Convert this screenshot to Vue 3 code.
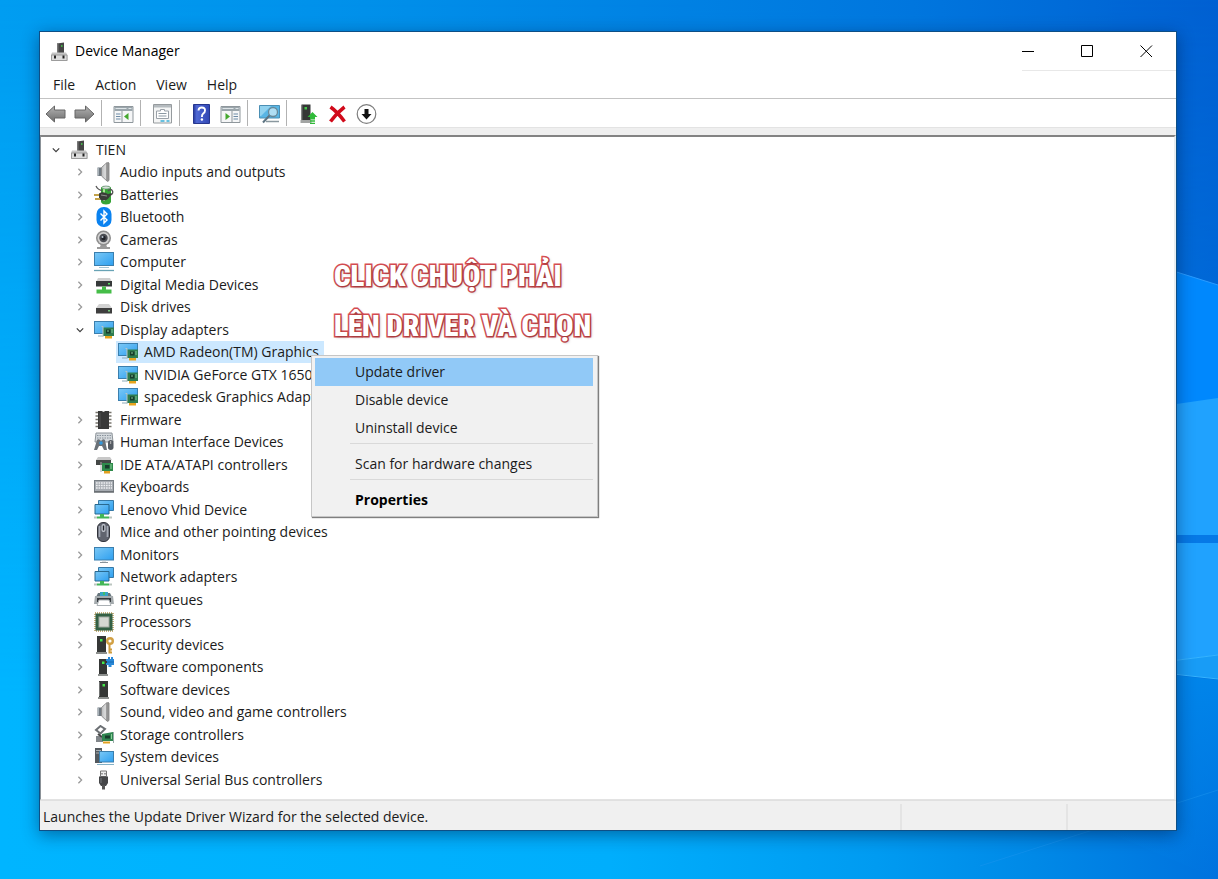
<script setup>
import { ref } from 'vue'

const menus = ['File', 'Action', 'View', 'Help']

const tools = [
  { icon: 'back', label: 'Back' },
  { icon: 'forward', label: 'Forward' },
  { sep: true },
  { icon: 'tree-pane', label: 'Show/Hide Console Tree' },
  { sep: true },
  { icon: 'properties', label: 'Properties' },
  { sep: true },
  { icon: 'help', label: 'Help' },
  { icon: 'action-pane', label: 'Show/Hide Action Pane' },
  { sep: true },
  { icon: 'scan', label: 'Scan for hardware changes' },
  { sep: true },
  { icon: 'update', label: 'Update device driver' },
  { icon: 'remove', label: 'Uninstall device' },
  { icon: 'disable', label: 'Disable device' },
]

const nodes = [
  { level: 0, icon: 'root', text: 'TIEN', open: true },
  { level: 1, icon: 'speaker', text: 'Audio inputs and outputs' },
  { level: 1, icon: 'battery', text: 'Batteries' },
  { level: 1, icon: 'bluetooth', text: 'Bluetooth' },
  { level: 1, icon: 'camera', text: 'Cameras' },
  { level: 1, icon: 'computer', text: 'Computer' },
  { level: 1, icon: 'media', text: 'Digital Media Devices' },
  { level: 1, icon: 'disk', text: 'Disk drives' },
  { level: 1, icon: 'display', text: 'Display adapters', open: true },
  { level: 2, icon: 'display', text: 'AMD Radeon(TM) Graphics', leaf: true },
  { level: 2, icon: 'display', text: 'NVIDIA GeForce GTX 1650', leaf: true },
  { level: 2, icon: 'display', text: 'spacedesk Graphics Adapter', leaf: true },
  { level: 1, icon: 'firmware', text: 'Firmware' },
  { level: 1, icon: 'hid', text: 'Human Interface Devices' },
  { level: 1, icon: 'ide', text: 'IDE ATA/ATAPI controllers' },
  { level: 1, icon: 'keyboard', text: 'Keyboards' },
  { level: 1, icon: 'network', text: 'Lenovo Vhid Device' },
  { level: 1, icon: 'mouse', text: 'Mice and other pointing devices' },
  { level: 1, icon: 'monitor', text: 'Monitors' },
  { level: 1, icon: 'network', text: 'Network adapters' },
  { level: 1, icon: 'printer', text: 'Print queues' },
  { level: 1, icon: 'cpu', text: 'Processors' },
  { level: 1, icon: 'security', text: 'Security devices' },
  { level: 1, icon: 'component', text: 'Software components' },
  { level: 1, icon: 'tower', text: 'Software devices' },
  { level: 1, icon: 'speaker', text: 'Sound, video and game controllers' },
  { level: 1, icon: 'storage', text: 'Storage controllers' },
  { level: 1, icon: 'system', text: 'System devices' },
  { level: 1, icon: 'usb', text: 'Universal Serial Bus controllers' },
]

const selected = ref(9)

const contextMenu = [
  { text: 'Update driver', active: true },
  { text: 'Disable device' },
  { text: 'Uninstall device' },
  { sep: true },
  { text: 'Scan for hardware changes' },
  { sep: true },
  { text: 'Properties', bold: true },
]
</script>

<template>
  <div class="desktop">
    <svg class="wallpaper" viewBox="0 0 1218 879" preserveAspectRatio="none" aria-hidden="true">
      <defs>
        <linearGradient id="w-base" x1="0" y1="0" x2="1" y2="0">
          <stop offset="0" stop-color="#009df1" />
          <stop offset=".3" stop-color="#0090ea" />
          <stop offset=".75" stop-color="#0076de" />
          <stop offset="1" stop-color="#0060d2" />
        </linearGradient>
        <linearGradient id="w-low" x1="0" y1="0" x2="1" y2="0">
          <stop offset="0" stop-color="#00b5ff" />
          <stop offset=".5" stop-color="#00aefc" />
          <stop offset=".72" stop-color="#009bf1" />
          <stop offset=".85" stop-color="#0089e7" />
          <stop offset="1" stop-color="#0072de" />
        </linearGradient>
        <linearGradient id="w-fade" x1="0" y1="0" x2="0" y2="1">
          <stop offset="0" stop-color="#fff" stop-opacity="0" />
          <stop offset=".8" stop-color="#fff" />
        </linearGradient>
        <linearGradient id="w-corner" x1="0" y1="0" x2="0" y2="1">
          <stop offset="0" stop-color="#0085ea" />
          <stop offset="1" stop-color="#0085ea" stop-opacity="0" />
        </linearGradient>
        <mask id="w-mask"><rect width="1218" height="879" fill="url(#w-fade)" /></mask>
      </defs>
      <rect width="1218" height="879" fill="url(#w-base)" />
      <rect width="1218" height="879" fill="url(#w-low)" mask="url(#w-mask)" />
      <path d="M1100 248L1218 285V420H1100z" fill="#0088fd" />
      <path d="M1100 248L1218 285" stroke="#2a9cff" fill="none" />
      <path d="M1100 415L1218 398V655L1100 670z" fill="#20a2fe" />
      <path d="M1100 535H1218V543H1100z" fill="#0679e6" />
      <path d="M1100 670L1218 655V679L1100 665z" fill="#189cf6" />
      <path d="M1100 667L1218 680V879L1100 829z" fill="url(#w-corner)" />
      <path d="M1100 670L1218 655M1100 666L1218 679" stroke="#36b4ff" fill="none" />
      <path d="M980 866L1218 790" stroke="#1b96f0" stroke-opacity=".5" fill="none" />
    </svg>

    <svg class="defs" width="0" height="0" aria-hidden="true">
      <defs>
        <linearGradient id="g-screen" x1="0" y1="0" x2="1" y2="1">
          <stop offset="0" stop-color="#7bc8f5" />
          <stop offset="1" stop-color="#2d9ff0" />
        </linearGradient>
        <linearGradient id="g-metal" x1="0" y1="0" x2="1" y2="0">
          <stop offset="0" stop-color="#b8babc" />
          <stop offset=".5" stop-color="#dcdcdc" />
          <stop offset="1" stop-color="#8e8e8e" />
        </linearGradient>
        <linearGradient id="g-arrow" x1="0" y1="0" x2="0" y2="1">
          <stop offset="0" stop-color="#b4b4b4" />
          <stop offset="1" stop-color="#6c6c6c" />
        </linearGradient>
        <linearGradient id="g-help" x1="0" y1="0" x2="1" y2="0">
          <stop offset="0" stop-color="#25389c" />
          <stop offset=".2" stop-color="#4f68d4" />
          <stop offset="1" stop-color="#3147b4" />
        </linearGradient>

        <symbol id="root" viewBox="0 0 20 20">
          <path d="M7 1.500L14 .5V11H7z" fill="#454545" />
          <path d="M7 1.500L8.500 1.200V11H7z" fill="#777" />
          <rect x="11" y="3" width="1.500" height="2" fill="#46b04a" />
          <path d="M2 10.500H16L17.500 13V19H1V13z" fill="#c6c6c6" />
          <path d="M1.500 13H17V18.500H1.500z" fill="#dcdcdc" stroke="#9c9c9c" />
          <path d="M4 13.500h2v3H4zM12.500 13.500h2v3h-2z" fill="#222" />
        </symbol>
        <symbol id="speaker" viewBox="0 0 20 20">
          <path d="M3.500 5.500H7.500V14H3.500z" fill="#6f7880" />
          <path d="M4.500 6V13.500" stroke="#a9b2b9" />
          <path d="M7.500 5.500L13.500 0L15 1V18.500L13.500 19.500L7.500 14z" fill="url(#g-metal)" stroke="#7c7c7c" stroke-width=".8" />
          <path d="M13 1V19" stroke="#828282" stroke-width="1.200" />
        </symbol>
        <symbol id="battery" viewBox="0 0 20 20">
          <path d="M7 3Q7 1 12 1T17 3V17Q16 19.500 12 19.500T7 17z" fill="#36a336" />
          <path d="M10 4V16" stroke="#a9e893" stroke-width="2" />
          <ellipse cx="12" cy="2.500" rx="4" ry="1.500" fill="#d9e6d9" stroke="#687" stroke-width=".7" />
          <path d="M2 1Q4 5 8 5.500M13 11Q20 10 18.500 6Q17 3 14 6" fill="none" stroke="#555" stroke-width="1.300" />
          <path d="M5 8.500Q9 6 14 9L18 8L15.500 12Q13 16 8 15.500L5 14z" fill="#3a3d38" />
          <path d="M7 10L13 11" stroke="#8d928b" />
          <path d="M0 10H5M1 14H6" stroke="#c3a24a" stroke-width="1.800" />
        </symbol>
        <symbol id="bluetooth" viewBox="0 0 20 20">
          <rect x="2.500" y="0" width="15" height="20" rx="7" fill="#0a82f0" />
          <path d="M6.500 6.500L13 13L10 16V4L13 7L6.500 13.500" fill="none" stroke="#fff" stroke-width="1.400" />
        </symbol>
        <symbol id="camera" viewBox="0 0 20 20">
          <path d="M7 14h5l1 3h3v2H3v-2h3z" fill="#9a9a9a" />
          <circle cx="9.500" cy="8" r="7.500" fill="#8d8d8d" />
          <circle cx="9.500" cy="8" r="6" fill="#d1d1d1" />
          <circle cx="9.500" cy="8" r="4.200" fill="#4c4e54" />
          <circle cx="9.500" cy="8" r="2.200" fill="#202228" />
          <circle cx="8.500" cy="7" r="1" fill="#b9c4d0" />
        </symbol>
        <symbol id="monitor" viewBox="0 0 20 20">
          <rect x=".5" y="2.500" width="19" height="12.500" fill="url(#g-screen)" stroke="#3b7fae" />
          <path d="M6 17.500H14" stroke="#87939b" />
          <path d="M8 16H12" stroke="#b6c2c9" />
        </symbol>
        <symbol id="computer" viewBox="0 0 20 20">
          <rect x=".5" y=".5" width="19" height="13" fill="url(#g-screen)" stroke="#3b7fae" />
          <path d="M5 15.500H15" stroke="#a4c3d2" />
          <path d="M0 18.500H20" stroke="#68a3b5" stroke-width="1.300" />
        </symbol>
        <symbol id="media" viewBox="0 0 20 20">
          <path d="M4 3H16L18 7H2z" fill="#cfcfcf" />
          <rect x="2" y="6" width="16" height="5.500" fill="#36393a" />
          <rect x="14" y="8" width="2" height="1.500" fill="#55db61" />
          <path d="M8 11.500H12V14.500H17.500V18.500H2.500V14.500H8z" fill="#45bd48" />
        </symbol>
        <symbol id="disk" viewBox="0 0 20 20">
          <path d="M5 7H15L18 11H2z" fill="#d2d2d2" />
          <rect x="2" y="11" width="16" height="5.500" fill="#3e3e3e" />
          <rect x="14" y="13" width="2" height="1.500" fill="#79cb7d" />
        </symbol>
        <symbol id="display" viewBox="0 0 20 20">
          <rect x=".5" y="1.500" width="19" height="12" fill="url(#g-screen)" stroke="#3b7fae" />
          <path d="M4 16H9" stroke="#8dabba" />
          <path d="M9 7.500H20V16H9z" fill="#2f7d50" />
          <path d="M7.500 6.500H9V17" fill="none" stroke="#bac6c5" />
          <rect x="12" y="9.500" width="4.500" height="4" fill="#183c2c" />
          <path d="M13 11h2M18 9v4" stroke="#83c998" />
          <path d="M11 16H18V18.500H11z" fill="#e8a41c" />
        </symbol>
        <symbol id="firmware" viewBox="0 0 20 20">
          <path d="M1.500 2.500H17.500M1.500 6H17.500M1.500 9.500H17.500M1.500 13H17.500M1.500 16.500H17.500" stroke="#77746c" stroke-width="1.700" />
          <path d="M4 1H8Q9.500 3 11 1H15V19H4z" fill="#393939" />
          <path d="M6 3V17" stroke="#555" />
        </symbol>
        <symbol id="hid" viewBox="0 0 20 20">
          <path d="M2 1H18L19 10H1z" fill="#d4d9dd" stroke="#8d949a" />
          <path d="M3 3.500H17M3 6H17" stroke="#87909a" stroke-dasharray="1.500 1" />
          <path d="M3 8Q5 6 7 9Q9 6 11 8L13 18H10L8 14H5L3 18H0z" fill="#6a7178" />
          <circle cx="7" cy="11" r="1.800" fill="#3298dc" />
          <rect x="14" y="8" width="5.500" height="10" rx="2.700" fill="#555b63" />
          <path d="M16.700 9v3" stroke="#bbb" />
        </symbol>
        <symbol id="ide" viewBox="0 0 20 20">
          <path d="M4 2H16L18 5H2z" fill="#c8c8c8" />
          <rect x="2" y="5" width="15" height="5" fill="#444746" />
          <path d="M8 8H19V16H8z" fill="#2e8a4b" />
          <path d="M7 7V17" stroke="#aaa" />
          <rect x="11" y="10" width="4.500" height="3.500" fill="#183c2c" />
          <path d="M17 9v5" stroke="#8bd09b" />
          <path d="M10 16H16V18.500H10z" fill="#e0a020" />
        </symbol>
        <symbol id="keyboard" viewBox="0 0 20 20">
          <rect x=".5" y="3.500" width="19" height="11" fill="#a6abb1" stroke="#777e84" />
          <path d="M2 6H18M2 8.500H18M2 11H18" stroke="#eef0f2" stroke-width="1.300" stroke-dasharray="1.700 .8" />
          <path d="M0 15H20" stroke="#676c71" stroke-width="1.500" />
        </symbol>
        <symbol id="network" viewBox="0 0 20 20">
          <path d="M4.500 .5H19.500V10.500H4.500z" fill="url(#g-screen)" stroke="#3679a6" />
          <path d="M1 4.500H15V14H1z" fill="url(#g-screen)" stroke="#28698f" />
          <path d="M6 14H10V16.500H15V18.500H3V16.500H6z" fill="#43b657" />
          <path d="M0 17.500H3M15 17.500H18" stroke="#bbc5c0" stroke-width="2" />
        </symbol>
        <symbol id="mouse" viewBox="0 0 20 20">
          <rect x="3.500" y=".5" width="12" height="19" rx="5.500" fill="#60646f" stroke="#30323a" />
          <path d="M5.500 4V15M13.500 4V15" stroke="#a4aab6" stroke-width="1.700" />
          <rect x="7.500" y="2" width="4" height="8" rx="2" fill="#c5cad3" />
          <path d="M9.500 3.500V8.500" stroke="#262830" stroke-width="1.500" />
        </symbol>
        <symbol id="printer" viewBox="0 0 20 20">
          <path d="M4 3H16L18 7H2z" fill="#66757c" />
          <path d="M6 2H14V6H6z" fill="#39a4c6" />
          <path d="M9 2H11V5H9z" fill="#42bd6a" />
          <path d="M1 6H19L20 14H0z" fill="#a4aaad" />
          <path d="M3 8H17V12H3z" fill="#353a3e" />
          <path d="M5 10H15L17 15.500H3z" fill="#fff" stroke="#aab0b4" />
        </symbol>
        <symbol id="cpu" viewBox="0 0 20 20">
          <rect x="1" y="1" width="18" height="18" fill="none" stroke="#b69650" stroke-width="1.500" stroke-dasharray="1 1" />
          <rect x="1.500" y="1.500" width="17" height="17" fill="#336044" />
          <rect x="5" y="5" width="10" height="10" fill="#d5d8d2" stroke="#a2aaa1" />
        </symbol>
        <symbol id="tower" viewBox="0 0 20 20">
          <path d="M5 1H14V17H5z" fill="#353736" />
          <path d="M4 17H15V19H4z" fill="#8d908e" />
          <path d="M5.500 2V16" stroke="#717372" />
          <rect x="8.500" y="4" width="2.500" height="2.500" fill="#44e94b" />
        </symbol>
        <symbol id="security" viewBox="0 0 20 20">
          <path d="M3 1H12V17H3z" fill="#353736" />
          <path d="M2 17H13V19H2z" fill="#8d908e" />
          <rect x="6" y="4" width="2.500" height="2.500" fill="#44e94b" />
          <circle cx="16" cy="6" r="2.800" fill="none" stroke="#d2a044" stroke-width="2.400" />
          <path d="M15.500 9V18.500M16 14.500H18M16 17.500H18" stroke="#cf9c3d" stroke-width="2" />
        </symbol>
        <symbol id="component" viewBox="0 0 20 20">
          <path d="M5 2H13V17H5z" fill="#353736" />
          <path d="M4 17H14V19H4z" fill="#8d908e" />
          <rect x="8" y="4.500" width="2.500" height="2.500" fill="#44e94b" />
          <path d="M12 2H14V0H16V2H17V0H19V2H20V8H17.500V10H14.500V8H12V6H13V4H12z" fill="#2989d8" />
          <path d="M13 5H20" stroke="#1769b0" />
        </symbol>
        <symbol id="storage" viewBox="0 0 20 20">
          <path d="M6.500 1L11 4L6.500 8.500L2 5z" fill="none" stroke="#6c7074" stroke-width="2" />
          <path d="M2 11H9V17H2z" fill="#81868a" />
          <path d="M4 9L8 12" stroke="#444" stroke-width="2" />
          <path d="M8 9L19 7V16H8z" fill="#2f8550" />
          <rect x="11" y="10.500" width="5" height="3" fill="#183c2c" />
          <path d="M17.500 9v5" stroke="#8bd09b" />
          <path d="M9 16.500H16V18.500H9z" fill="#e0a020" />
          <path d="M19.500 7V18" stroke="#9aa" />
        </symbol>
        <symbol id="system" viewBox="0 0 20 20">
          <path d="M1 1H8V16H1z" fill="#53595e" />
          <path d="M2 3.500H7M2 6H7" stroke="#a9b0b5" />
          <rect x="5.500" y="4.500" width="14" height="10.500" fill="url(#g-screen)" stroke="#3b7fae" />
          <path d="M3 17.500H20" stroke="#84b1c7" />
        </symbol>
        <symbol id="usb" viewBox="0 0 20 20">
          <path d="M6.500 1H12.500V6.500H6.500z" fill="#eee" stroke="#777" />
          <path d="M8 3v1.500M11 3v1.500" stroke="#444" />
          <path d="M5 6.500H14V13L12 16H7L5 13z" fill="#454648" />
          <path d="M9.500 15V19.500" stroke="#555" stroke-width="3" />
          <path d="M7 8V13" stroke="#77797c" />
        </symbol>

        <symbol id="back" viewBox="0 0 20 20">
          <path d="M.5 10L9 2V6H19.500V14H9V18z" fill="url(#g-arrow)" stroke="#666" />
        </symbol>
        <symbol id="forward" viewBox="0 0 20 20">
          <path d="M19.500 10L11 2V6H.5V14H11V18z" fill="url(#g-arrow)" stroke="#666" />
        </symbol>
        <symbol id="tree-pane" viewBox="0 0 20 20">
          <path d="M.5 2.500H19.500V18.500H.5z" fill="#f5f6f7" stroke="#8f979c" />
          <path d="M1 3H19V7H1z" fill="#9ba6ac" />
          <path d="M2 4.500H13M15 4.500H18" stroke="#dfe5e8" />
          <path d="M8.500 7V18" stroke="#8f979c" />
          <path d="M2.500 10H7M2.500 12.500H7M2.500 15H7" stroke="#6d8ba6" />
          <path d="M15 9V16L10.500 12.500z" fill="#45a82f" />
        </symbol>
        <symbol id="action-pane" viewBox="0 0 20 20">
          <path d="M.5 2.500H19.500V18.500H.5z" fill="#f5f6f7" stroke="#8f979c" />
          <path d="M1 3H19V7H1z" fill="#9ba6ac" />
          <path d="M2 4.500H13M15 4.500H18" stroke="#dfe5e8" />
          <path d="M11.500 7V18" stroke="#8f979c" />
          <path d="M13 10H17.500M13 12.500H17.500M13 15H17.500" stroke="#6d8ba6" />
          <path d="M5 9V16L9.500 12.500z" fill="#45a82f" />
        </symbol>
        <symbol id="properties" viewBox="0 0 20 20">
          <path d="M1 .5H19V19H1z" fill="#f4f5f5" stroke="#969b9e" />
          <path d="M1.500 1H18.500V3.500H1.500z" fill="#b5bbbf" />
          <path d="M4 7H8V5.500H12V7H16V14.500H4z" fill="#fff" stroke="#9aa1a8" />
          <path d="M6 9.500H14M6 12H14" stroke="#8c99a3" />
          <path d="M8 17H12M14 17H17" stroke="#39afd8" stroke-width="1.500" />
        </symbol>
        <symbol id="help" viewBox="0 0 20 20">
          <path d="M2 .5H18V19.500H2z" fill="url(#g-help)" stroke="#26368e" />
          <path d="M7 6.500Q7 3.500 10.300 3.500T13.500 6.500Q13.500 8.300 11.700 9.500Q10.400 10.500 10.400 13" fill="none" stroke="#fff" stroke-width="1.900" />
          <circle cx="10.400" cy="15.500" r="1.200" fill="#fff" />
        </symbol>
        <symbol id="scan" viewBox="0 0 21 20">
          <path d="M.5 1.500H20.500V14H.5z" fill="#58b5e4" stroke="#4b8fb4" />
          <path d="M1 2H12L2 12H1z" fill="#91d2ef" />
          <path d="M7 17.500H20" stroke="#8a989f" stroke-width="1.500" />
          <circle cx="14" cy="8" r="4.500" fill="#c5e9f8" fill-opacity=".8" stroke="#67899a" stroke-width="1.300" />
          <path d="M10.500 11.500L4 18.500" stroke="#5d7482" stroke-width="2" />
        </symbol>
        <symbol id="update" viewBox="0 0 20 20">
          <path d="M3 .5H12V16H3z" fill="#353736" />
          <path d="M2 16H13V19H2z" fill="#a2a4a3" />
          <path d="M3.500 1V16" stroke="#717372" />
          <rect x="6" y="3" width="2.500" height="2.500" fill="#44c74b" />
          <path d="M14 8L19 13H16.500V15.500H11.500V13H9z" fill="#30ba39" />
          <path d="M11.500 17H16.500M11.500 19.300H16.500" stroke="#30ba39" stroke-width="1.300" />
        </symbol>
        <symbol id="remove" viewBox="0 0 20 20">
          <path d="M3 3Q10 8 17 17.500M17 3Q9 9 3 17.500" fill="none" stroke="#d10a1a" stroke-width="3.500" />
        </symbol>
        <symbol id="disable" viewBox="0 0 20 20">
          <circle cx="10" cy="10" r="9.300" fill="#fff" stroke="#7d7d7d" stroke-width="1.200" />
          <path d="M8 5H12V10H15L10 15.500L5 10H8z" fill="#111" />
        </symbol>
      </defs>
    </svg>

    <main class="window">
      <header class="titlebar">
        <svg class="app-icon"><use href="#root" /></svg>
        <h1 class="title">Device Manager</h1>
        <div class="controls">
          <button class="control" type="button" aria-label="Minimize">
            <svg viewBox="0 0 13 13"><path d="M0 6.500H12" /></svg>
          </button>
          <button class="control" type="button" aria-label="Maximize">
            <svg viewBox="0 0 13 13"><path d="M.5 .5H11.500V11.500H.5z" /></svg>
          </button>
          <button class="control" type="button" aria-label="Close">
            <svg viewBox="0 0 13 13"><path d="M.5 .5L12 12M12 .5L.5 12" /></svg>
          </button>
        </div>
      </header>

      <nav class="menubar">
        <button v-for="m in menus" :key="m" class="menu" type="button">{{ m }}</button>
      </nav>

      <div class="toolbar" role="toolbar" aria-label="Standard">
        <template v-for="(t, i) in tools" :key="i">
          <span v-if="t.sep" class="tool-sep"></span>
          <button v-else class="tool" type="button" :aria-label="t.label">
            <svg><use :href="'#' + t.icon" /></svg>
          </button>
        </template>
      </div>

      <section class="pane">
        <ul class="tree" role="tree" aria-label="Devices">
          <li
            v-for="(n, i) in nodes"
            :key="i"
            class="node"
            :class="'level-' + n.level"
            role="treeitem"
            :aria-level="n.level + 1"
            :aria-selected="i === selected"
          >
            <span class="chevron" :class="{ open: n.open }">
              <svg v-if="!n.leaf" viewBox="0 0 10 10"><path d="M3 1L7 5L3 9" /></svg>
            </span>
            <button class="entry" :class="{ selected: i === selected }" type="button" @click="selected = i">
              <svg class="node-icon"><use :href="'#' + n.icon" /></svg>
              <span>{{ n.text }}</span>
            </button>
          </li>
        </ul>
      </section>

      <footer class="statusbar">
        <span class="status-text">Launches the Update Driver Wizard for the selected device.</span>
        <span class="status-cell wide"></span>
        <span class="status-cell"></span>
      </footer>

      <p class="caption">CLICK CHUỘT PHẢI<br />LÊN DRIVER VÀ CHỌN</p>

      <div class="context" role="menu">
        <template v-for="(c, i) in contextMenu" :key="i">
          <hr v-if="c.sep" class="context-sep" />
          <button
            v-else
            class="context-item"
            :class="{ active: c.active, bold: c.bold }"
            type="button"
            role="menuitem"
          >{{ c.text }}</button>
        </template>
      </div>
    </main>
  </div>
</template>

<style>
html,
body {
  background: #0091ee;
}
</style>

<style scoped>
.desktop {
  position: relative;
  display: flex;
  box-sizing: border-box;
  min-height: 100vh;
  padding: 31px 41px 48px 39px;
  font-family: "Open Sans", "Noto Sans", sans-serif;
  font-size: 14px;
  line-height: 20px;
  color: #1b1b1b;
}

.wallpaper {
  position: absolute;
  inset: 0;
  width: 100%;
  height: 100%;
}

.defs {
  position: absolute;
}

button {
  margin: 0;
  padding: 0;
  border: 0;
  background: none;
  color: inherit;
  font: inherit;
}

.window {
  position: relative;
  display: flex;
  flex: 1;
  flex-direction: column;
  min-width: 0;
  border: 1px solid #0e4f86;
  background: #fff;
  box-shadow: 0 4px 16px rgba(0, 20, 60, 0.45);
}

.titlebar {
  position: relative;
  display: flex;
  align-items: center;
  height: 39px;
  padding-left: 10px;
  color: #000;
}

.titlebar::after {
  content: "";
  position: absolute;
  right: 0;
  bottom: 0;
  width: 154px;
  height: 1px;
  background: #e8e8e8;
}

.app-icon {
  width: 20px;
  height: 20px;
}

.title {
  flex: 1;
  margin: 0 0 0 5px;
  padding-bottom: 2px;
  font-size: 14px;
  font-weight: 400;
}

.controls {
  display: flex;
}

.control {
  display: flex;
  align-items: center;
  justify-content: center;
  width: 59px;
  height: 39px;
}

.control svg {
  width: 13px;
  height: 13px;
  fill: none;
  stroke: #000;
}

.menubar {
  display: flex;
  gap: 20px;
  padding: 4px 13px 3px;
}

.toolbar {
  display: flex;
  align-items: center;
  height: 28px;
  padding-left: 1px;
  border-top: 1px solid #c3c3c3;
  border-bottom: 1px solid #e3e3e3;
}

.tool {
  display: flex;
  align-items: center;
  justify-content: center;
  width: 29px;
  height: 28px;
  padding-top: 2px;
}

.tool svg {
  width: 21px;
  height: 20px;
}

.tool-sep {
  width: 1px;
  height: 26px;
  margin: 0 7px 0 2px;
  background: #b2b2b2;
}

.pane {
  flex: 1;
  border-top: 7px solid #efefef;
  background: #fff;
}

.tree {
  display: grid;
  grid-auto-rows: 23px 22px;
  box-sizing: border-box;
  height: 100%;
  margin: 0;
  padding: 1px 0 8px 4px;
  border: solid;
  border-width: 2px 2px 1px 1px;
  border-color: #838383 #e8edf0 #e3e3e3 #8b9298;
  list-style: none;
}

.node {
  display: flex;
  align-items: center;
}

.level-1 {
  padding-left: 24px;
}

.level-2 {
  padding-left: 48px;
}

.chevron {
  display: flex;
  justify-content: center;
  width: 22px;
  margin-right: 1px;
}

.chevron svg {
  width: 8px;
  height: 8px;
  fill: none;
  stroke: #9a9a9a;
  stroke-width: 1.6;
}

.chevron.open svg {
  stroke: #404040;
  transform: rotate(90deg);
}

.entry {
  display: flex;
  align-items: center;
  align-self: stretch;
  gap: 6px;
  padding: 0 5px 0 2px;
  white-space: nowrap;
}

.entry.selected {
  background: #cce8ff;
}

.node-icon {
  width: 20px;
  height: 20px;
}

.statusbar {
  display: flex;
  align-items: stretch;
  height: 29px;
  padding-right: 2px;
  background: #f0f0f0;
  border-top: 1px solid #e0e0e0;
}

.status-text {
  flex: 1;
  padding: 6px 3px 0;
}

.status-cell {
  width: 106px;
  margin-top: 3px;
  border-left: 2px solid #e4e4e4;
}

.status-cell.wide {
  width: 164px;
}

.caption {
  position: absolute;
  top: 219px;
  left: 294px;
  margin: 0;
  font-family: "Roboto Condensed", "Open Sans Condensed", "Liberation Sans Narrow", "Roboto", sans-serif;
  font-size: 29px;
  font-weight: 900;
  line-height: 50px;
  white-space: nowrap;
  color: #fff;
  -webkit-text-stroke: 3px #dc5055;
  paint-order: stroke fill;
  text-shadow: 1px 1px 3px rgba(60, 20, 20, 0.5);
}

.context {
  position: absolute;
  top: 323px;
  left: 271px;
  display: flex;
  flex-direction: column;
  box-sizing: border-box;
  width: 287px;
  padding: 2px 4px 2px 3px;
  border: 1px solid #c6c6c6;
  background: #f1f1f1;
  box-shadow: 1px 1px 1px rgba(0, 0, 0, 0.5);
}

.context-item {
  height: 28px;
  padding-left: 40px;
  text-align: left;
}

.context-item.active {
  background: #91c9f7;
}

.context-item.bold {
  font-weight: 700;
  color: #000;
}

.context-sep {
  align-self: stretch;
  height: 1px;
  margin: 1px 0 6px 35px;
  border: 0;
  background: #d9d9d9;
}
</style>
